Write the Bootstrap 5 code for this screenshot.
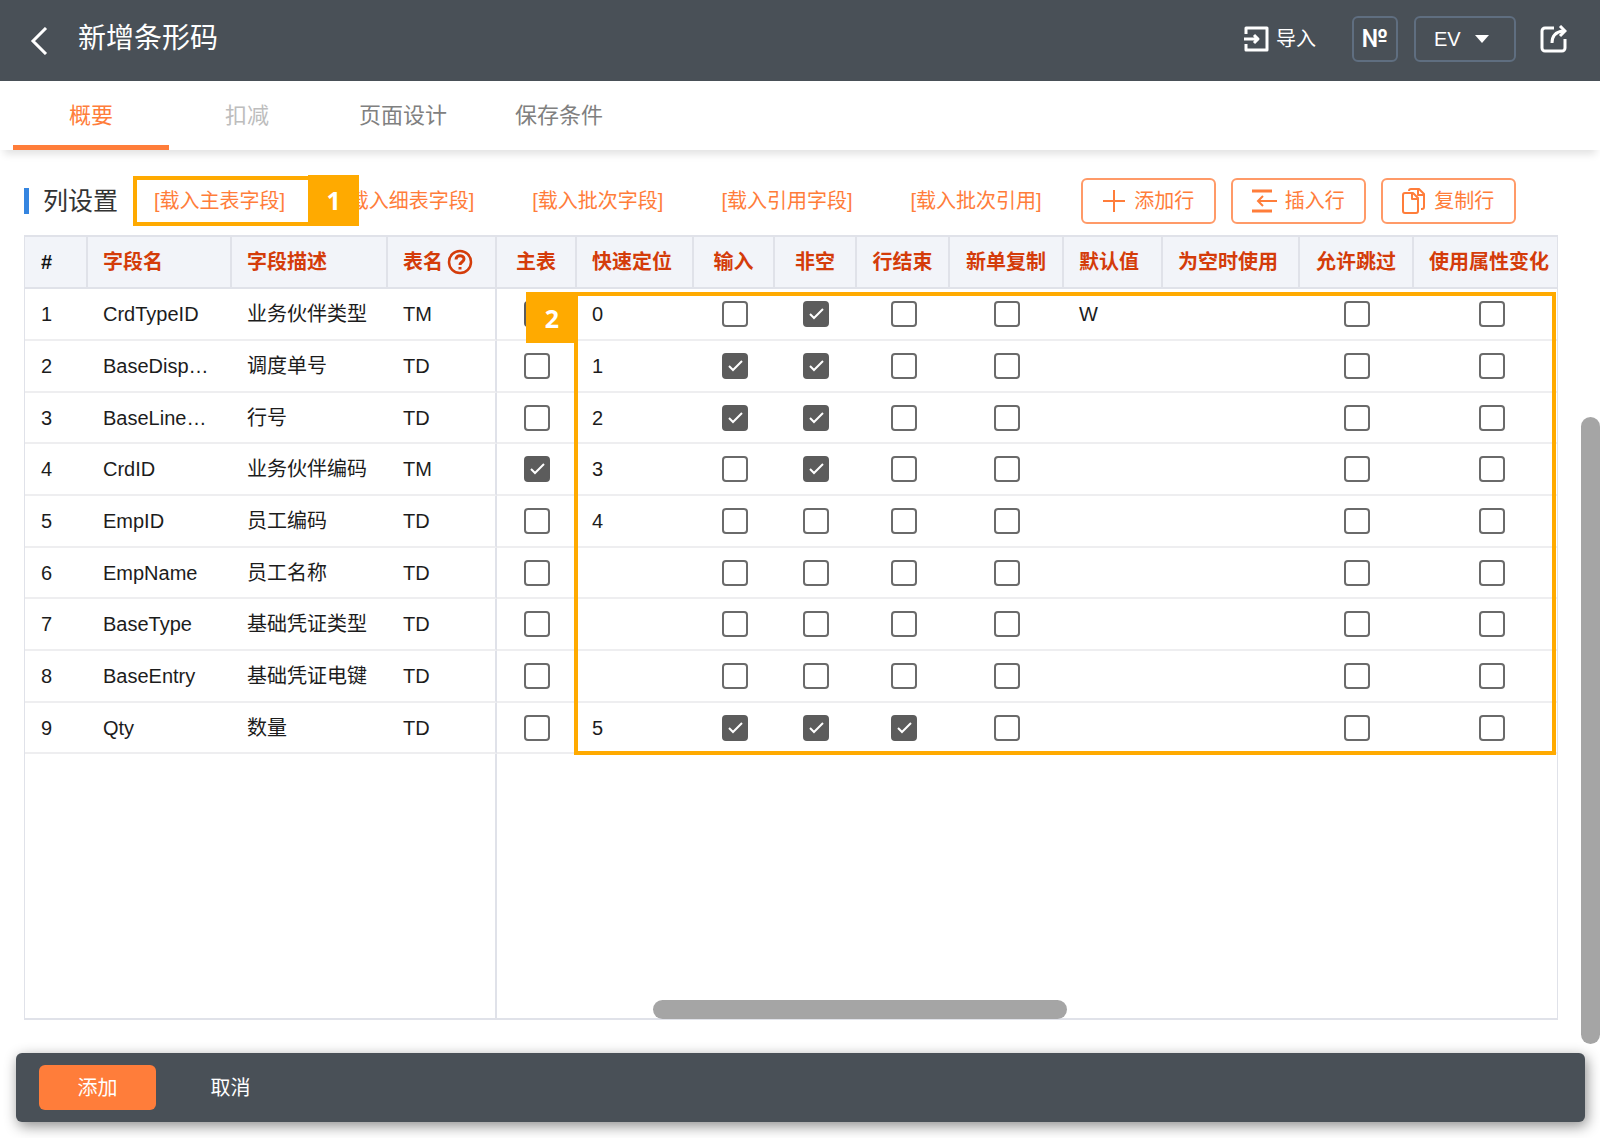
<!DOCTYPE html>
<html lang="zh-CN">
<head>
<meta charset="utf-8">
<meta name="viewport" content="width=device-width, initial-scale=1">
<title>新增条形码</title>
<link href="https://cdn.jsdelivr.net/npm/bootstrap@5.3.0/dist/css/bootstrap.min.css" rel="stylesheet">
<style>
  :root { --slate: #495057; --orange: #ff7d3a; --mark: #ffaa00; --line: #e0e2e9; }
  body { font-family: "Liberation Sans", "Noto Sans CJK SC", sans-serif; font-size: 20px; line-height: 28px; color: #1c1c1c; }
  .app-head { background: var(--slate); height: 81px; padding: 0 33px 4px 30px; }
  .app-title { font-size: 28px; line-height: 40px; font-weight: 400; }
  .import-btn { font-size: 20px; line-height: 28px; gap: 7px; margin-right: 12px; }
  .head-box { height: 46px; border: 2px solid #5f6e80; border-radius: 6px; background: transparent; color: #fff; }
  .head-no { width: 46px; font: 700 24px/28px Inter, sans-serif; }
  .head-ev { width: 102px; padding: 0 25px 0 18px; }
  .app-tabs { height: 69px; padding-left: 13px; box-shadow: 0 8px 8px -4px rgba(0,0,0,.12); }
  .app-tabs .nav-link { width: 156px; height: 69px; padding: 0; border-bottom: 5px solid transparent; border-radius: 0; font-size: 22px; line-height: 70px; text-align: center; color: #808080; }
  .app-tabs .nav-link.active { color: var(--orange); border-bottom-color: var(--orange); }
  .app-tabs .nav-link.disabled { color: #bdbdbd; }
  .app-main { padding: 28px 42px 33px 24px; }
  .tool-row { height: 45px; margin-bottom: 12px; }
  .sect-title { border-left: 5px solid #3585e0; padding-left: 14px; font-size: 25px; line-height: 26px; font-weight: 400; color: #333; margin-right: 36px; }
  .load-links { gap: 58px; }
  .load-links a, .btn-line { color: var(--orange); }
  .tool-btns { gap: 15px; margin-left: 39px; }
  .btn-line { width: 135px; height: 46px; padding: 0; border: 2px solid #ff9a68; border-radius: 6px; font-size: 20px; }
  .btn-line:hover { background: #fff4ee; color: var(--orange); }
  .mark-frame { position: absolute; border: 4px solid var(--mark); pointer-events: none; }
  .mark-num { position: absolute; display: flex; align-items: center; justify-content: center; height: 51px; background: var(--mark); color: #fff; font: 700 25px/28px "Open Sans", sans-serif; }
  .mark-links { inset: -11px -27px -11px -21px; }
  .mark-links .mark-num { left: 100%; top: -5px; width: 51px; }
  .mark-cells { left: 549px; right: 1px; top: 55px; height: 463px; }
  .mark-cells .mark-num { right: 100%; top: -4px; width: 52px; }
  .grid-wrap { border: 1px solid var(--line); border-top-width: 2px; border-bottom-width: 2px; }
  .grid-scroll { overflow: hidden; }
  .field-grid { table-layout: fixed; width: 100%; min-width: 1545px; height: 100%; border-collapse: separate; border-spacing: 0; }
  .field-grid th { height: 52px; padding: 0 0 0 15px; background: #f2f4f9; border-right: 2px solid var(--line); border-bottom: 2px solid var(--line); color: #d43c0a; font-weight: 700; white-space: nowrap; }
  .field-grid th:first-child { color: #111; }
  .field-grid th.tick-col { padding-left: 0; text-align: center; }
  .field-grid td { height: 52px; padding: 0 0 0 15px; border-bottom: 2px solid #eeeef0; white-space: nowrap; overflow: hidden; }
  .field-grid tr > :first-child { padding-left: 16px; }
  .field-grid tr:nth-child(3n) td { height: 51px; }
  .field-grid td:nth-child(4) { border-right: 2px solid var(--line); }
  .field-grid td.tick { padding: 0; text-align: center; }
  .field-grid tr.rest td { height: auto; border-bottom: 0; }
  .field-grid .form-check-input { display: block; width: 26px; height: 26px; margin: 0 auto; border: 2px solid #6a6a6a; border-radius: 4px; }
  .field-grid .form-check-input:checked { background-color: #5c5c5c; border-color: #5c5c5c; background-size: 20px; background-image: url("data:image/svg+xml,%3csvg xmlns='http://www.w3.org/2000/svg' viewBox='0 0 20 20'%3e%3cpath fill='none' stroke='%23fff' stroke-width='2' d='M4 10l4 4 9-9'/%3e%3c/svg%3e"); }
  .thumb { position: absolute; background: #a5a5a5; border-radius: 10px; }
  .thumb-x { left: 41%; width: 27%; height: 19px; bottom: -1px; }
  .thumb-y { right: 0; width: 19px; top: 267px; bottom: 9px; }
  .foot-bar { height: 69px; margin: 0 15px 16px 16px; padding: 0 23px; background: var(--slate); border-radius: 6px; box-shadow: 2px 4px 14px rgba(0,0,0,.45); }
  .foot-bar .btn { width: 117px; height: 45px; padding: 0; border: 0; border-radius: 6px; font-size: 20px; color: #fff; }
  .foot-bar .btn-add { background: var(--orange); }
</style>
<script src="https://cdn.jsdelivr.net/npm/bootstrap@5.3.0/dist/js/bootstrap.bundle.min.js"></script>
</head>
<body class="d-flex flex-column min-vh-100 bg-white">
<header class="app-head d-flex align-items-center text-white">
  <a href="#" class="d-flex pt-1 me-4" aria-label="返回">
    <svg width="20" height="28" viewBox="0 0 20 28" fill="none" stroke="#fff" stroke-width="3"><path d="M16 1 3 14l13 13"/></svg>
  </a>
  <h1 class="app-title mb-0 ms-1">新增条形码</h1>
  <div class="d-flex align-items-center ms-auto">
    <button type="button" class="import-btn btn p-0 border-0 text-white d-flex align-items-center">
      <svg width="25" height="28" viewBox="0 0 25 28" fill="none" stroke="#fff" stroke-width="3" stroke-linejoin="round"><path d="M2 9V3h21v22H2v-6M0 14h14M10 10l4 4-4 4"/></svg>
      导入
    </button>
    <button type="button" class="head-box head-no p-0 ms-4">№</button>
    <button type="button" class="head-box head-ev d-flex align-items-center justify-content-between ms-3">EV
      <svg width="14" height="8" viewBox="0 0 14 8" fill="#fff"><path d="M0 0h14L7 8z"/></svg>
    </button>
    <a href="#" class="d-flex ms-4" aria-label="分享">
      <svg width="27" height="28" viewBox="0 0 27 28" fill="none" stroke="#fff" stroke-width="3"><path d="M14 3H5a3 3 0 0 0-3 3v17a3 3 0 0 0 3 3h17a3 3 0 0 0 3-3V14M12 18c0-7 3-11 11-12"/><path d="M20 1l5 5-5 5"/></svg>
    </a>
  </div>
</header>

<nav class="app-tabs nav flex-nowrap">
  <a class="nav-link active" href="#">概要</a>
  <a class="nav-link disabled" aria-disabled="true" href="#">扣减</a>
  <a class="nav-link" href="#">页面设计</a>
  <a class="nav-link" href="#">保存条件</a>
</nav>

<main class="app-main flex-grow-1 d-flex flex-column position-relative">
  <div class="tool-row d-flex align-items-center text-nowrap">
    <h2 class="sect-title mb-0">列设置</h2>
    <div class="load-links d-flex">
      <div class="position-relative">
        <a href="#" class="text-decoration-none">[载入主表字段]</a>
        <div class="mark-frame mark-links"><span class="mark-num">1</span></div>
      </div>
      <a href="#" class="text-decoration-none">[载入细表字段]</a>
      <a href="#" class="text-decoration-none">[载入批次字段]</a>
      <a href="#" class="text-decoration-none">[载入引用字段]</a>
      <a href="#" class="text-decoration-none">[载入批次引用]</a>
    </div>
    <div class="tool-btns d-flex">
      <button type="button" class="btn btn-line d-flex align-items-center justify-content-center gap-2">
        <svg width="24" height="24" viewBox="0 0 24 24" fill="none" stroke="currentColor" stroke-width="2"><path d="M12 1v22M1 12h22"/></svg>添加行
      </button>
      <button type="button" class="btn btn-line d-flex align-items-center justify-content-center gap-2">
        <svg width="25" height="24" viewBox="0 0 25 24" fill="none" stroke="currentColor" stroke-width="2"><path d="M0 2h20M0 22h20" stroke-width="3"/><path d="M25 12H6M11 7l-5 5 5 5"/></svg>插入行
      </button>
      <button type="button" class="btn btn-line d-flex align-items-center justify-content-center gap-2">
        <svg width="24" height="28" viewBox="0 0 24 28" fill="none" stroke="currentColor" stroke-width="2" stroke-linejoin="round"><path d="M1 8a2 2 0 0 1 2-2h8l5 5v13a2 2 0 0 1-2 2H3a2 2 0 0 1-2-2zM10 6v6h6M7 4a2 2 0 0 1 2-2h8l5 5v13a2 2 0 0 1-2 2h-1M16 2v6h6"/></svg>复制行
      </button>
    </div>
  </div>

  <div class="grid-wrap position-relative flex-grow-1 d-flex">
    <div class="grid-scroll flex-grow-1">
      <table class="field-grid">
        <colgroup>
          <col width="63"><col width="144"><col width="156"><col width="109"><col width="80"><col width="117"><col width="81"><col width="82"><col width="93"><col width="114"><col width="99"><col width="137"><col width="114"><col width="156">
        </colgroup>
        <thead>
          <tr>
            <th>#</th><th>字段名</th><th>字段描述</th>
            <th><span class="d-flex align-items-center">表名
              <svg class="ms-1" width="26" height="26" viewBox="0 0 26 26" fill="none" stroke="currentColor" stroke-width="2.5"><circle cx="13" cy="13" r="11"/><path stroke-width="3" d="M9 10.500c0-5 8-5 8-.5 0 3-4 3-4 6M13 18v2.500"/></svg></span></th>
            <th class="tick-col">主表</th><th>快速定位</th><th class="tick-col">输入</th><th class="tick-col">非空</th><th class="tick-col">行结束</th><th class="tick-col">新单复制</th><th>默认值</th><th>为空时使用</th><th class="tick-col">允许跳过</th><th>使用属性变化</th>
          </tr>
        </thead>
        <tbody id="rows"></tbody>
      </table>
    </div>
    <div class="mark-frame mark-cells"><span class="mark-num">2</span></div>
    <div class="thumb thumb-x"></div>
  </div>
  <div class="thumb thumb-y"></div>
</main>

<footer class="foot-bar d-flex align-items-center gap-3">
  <button type="button" class="btn btn-add">添加</button>
  <button type="button" class="btn">取消</button>
</footer>

<script>
  // name, description, table, main, order, input, required, row end, copy, default
  const fields = [
    ["CrdTypeID", "业务伙伴类型", "TM", 1, "0", 0, 1, 0, 0, "W"],
    ["BaseDisp…", "调度单号", "TD", 0, "1", 1, 1, 0, 0, ""],
    ["BaseLine…", "行号", "TD", 0, "2", 1, 1, 0, 0, ""],
    ["CrdID", "业务伙伴编码", "TM", 1, "3", 0, 1, 0, 0, ""],
    ["EmpID", "员工编码", "TD", 0, "4", 0, 0, 0, 0, ""],
    ["EmpName", "员工名称", "TD", 0, "", 0, 0, 0, 0, ""],
    ["BaseType", "基础凭证类型", "TD", 0, "", 0, 0, 0, 0, ""],
    ["BaseEntry", "基础凭证电键", "TD", 0, "", 0, 0, 0, 0, ""],
    ["Qty", "数量", "TD", 0, "5", 1, 1, 1, 0, ""]
  ];
  const text = v => `<td>${v}</td>`;
  const tick = (on, label) => `<td class="tick"><input class="form-check-input" type="checkbox" aria-label="${label}"${on ? " checked" : ""}></td>`;
  document.getElementById("rows").innerHTML = fields.map((f, i) => "<tr>" +
    text(i + 1) + text(f[0]) + text(f[1]) + text(f[2]) + tick(f[3], "主表") + text(f[4]) +
    tick(f[5], "输入") + tick(f[6], "非空") + tick(f[7], "行结束") + tick(f[8], "新单复制") +
    text(f[9]) + text("") + tick(0, "允许跳过") + tick(0, "使用属性变化") + "</tr>").join("") +
    '<tr class="rest">' + "<td></td>".repeat(14) + "</tr>";
</script>
</body>
</html>
